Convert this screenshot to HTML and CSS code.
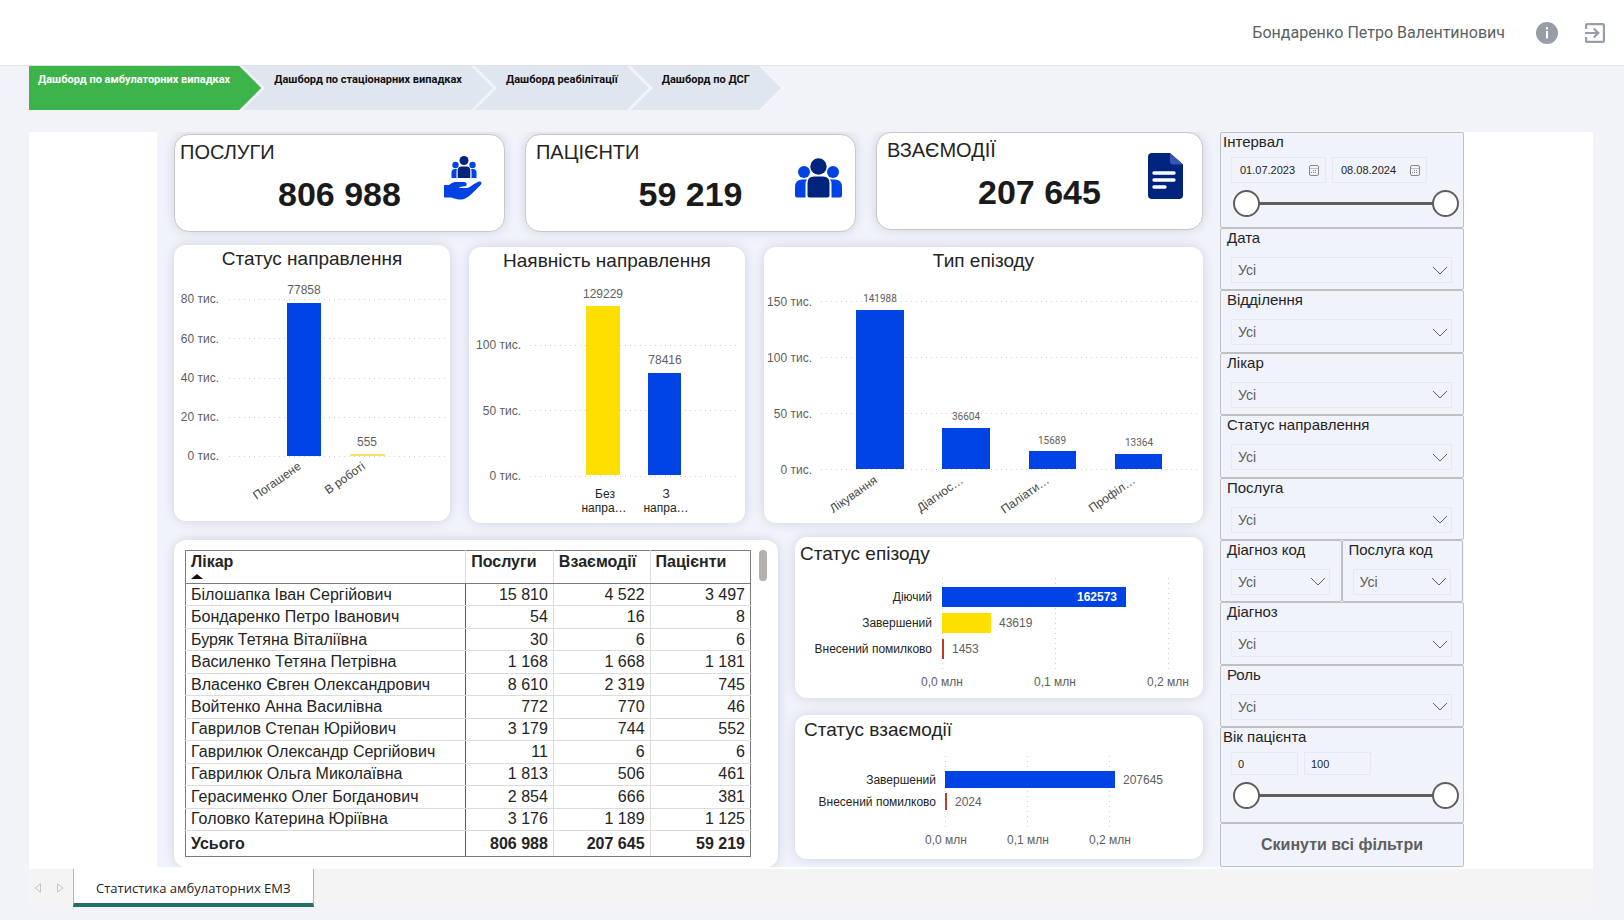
FILE: index.html
```html
<!DOCTYPE html>
<html lang="uk">
<head>
<meta charset="utf-8">
<meta name="viewport" content="width=device-width, initial-scale=1">
<title>Статистика амбулаторних ЕМЗ</title>
<link rel="stylesheet" href="styles.css">
</head>
<body>
<header class="topbar">
  <span class="user-name">Бондаренко Петро Валентинович</span>
  <button class="icon-btn" type="button" aria-label="Інформація">
    <svg width="22" height="22" viewBox="0 0 22 22"><circle cx="11" cy="11" r="11" fill="#969fa7"/><path d="M10 5h2v2.400h-2zM10 9h2v7.500h-2z" fill="#fff"/></svg>
  </button>
  <button class="icon-btn" type="button" aria-label="Вийти">
    <svg width="22" height="22" viewBox="0 0 22 22" fill="none" stroke="#969fa7" stroke-width="2.200"><path d="M2.100 7V3.200Q2.100 2.100 3.200 2.100H18.800Q19.900 2.100 19.900 3.200V18.800Q19.900 19.900 18.800 19.900H3.200Q2.100 19.900 2.100 18.800V15M1 11H14M9.800 6.500L14.300 11L9.800 15.500"/></svg>
  </button>
</header>

<nav class="steps" aria-label="Дашборди">
  <a class="step step-active" href="#ambulatory" aria-current="page">Дашборд по амбулаторних випадках</a>
  <a class="step" href="#inpatient">Дашборд по стаціонарних випадках</a>
  <a class="step" href="#rehab">Дашборд реабілітації</a>
  <a class="step" href="#drg">Дашборд по ДСГ</a>
</nav>

<main class="frame">
  <div class="canvas">
    <div class="board">
      <section class="row row-kpi">
        <article class="card kpi kpi-services">
          <h2 class="kpi-title">ПОСЛУГИ</h2>
          <p class="kpi-value">806 988</p>
          <svg class="kpi-icon" width="38" height="44" viewBox="0 0 38 44">
            <g fill="#0043e5">
              <circle cx="11.500" cy="9" r="3.200"/><circle cx="28.500" cy="9" r="3.200"/>
              <path d="M7.500 22V16.500Q7.500 13 11 13H13Q12.500 14 12.500 15.500V22ZM32.500 22V16.500Q32.500 13 29 13H27Q27.500 14 27.500 15.500V22Z"/>
              <path d="M0 29H5C8 26.500 10 26 13 26H20C23.500 26 23.500 30 20.500 30.300L15.500 31V32H22C25 32 27 30 30 28L34.500 25.800C37 25 38.500 27 36.500 29L27 38.500C23 42 20 43.500 17 43.500C11 43.500 9 41.500 6 41.500H0Z"/>
            </g>
            <g fill="#00247d"><circle cx="20" cy="4.500" r="4.500"/><path d="M13.700 22V14.500Q13.700 10.500 17.500 10.500H22.500Q26.300 10.500 26.300 14.500V22Z"/></g>
          </svg>
        </article>
        <article class="card kpi kpi-patients">
          <h2 class="kpi-title">ПАЦІЄНТИ</h2>
          <p class="kpi-value">59 219</p>
          <svg class="kpi-icon" width="47" height="40" viewBox="0 0 47 40">
            <g fill="#0043e5"><circle cx="9" cy="14" r="6"/><circle cx="38" cy="14" r="6"/>
            <path d="M12 21.500Q10.500 23.500 10.500 26V39.500H2Q0 39.500 0 37.500V29Q0 21.500 7.500 21.500ZM35 21.500Q36.500 23.500 36.500 26V39.500H45Q47 39.500 47 37.500V29Q47 21.500 39.500 21.500Z"/></g>
            <g fill="#00247d"><circle cx="23.500" cy="8.500" r="8.200"/><path d="M12.500 25Q12.500 18.500 19 18.500H28Q34.500 18.500 34.500 25V37.500Q34.500 39.500 32.500 39.500H14.500Q12.500 39.500 12.500 37.500Z"/></g>
          </svg>
        </article>
        <article class="card kpi kpi-visits">
          <h2 class="kpi-title">ВЗАЄМОДІЇ</h2>
          <p class="kpi-value">207 645</p>
          <svg class="kpi-icon" width="35" height="46" viewBox="0 0 35 46">
            <path d="M4 0H22L35 11.500V42Q35 46 31 46H4Q0 46 0 42V4Q0 0 4 0Z" fill="#00247d"/>
            <path d="M22 0L35 11.500H25Q22 11.500 22 8.500Z" fill="#3556b5"/>
            <path d="M6 20H26M6 27H26M6 34H17" stroke="#fff" stroke-width="3.400" stroke-linecap="round"/>
          </svg>
        </article>
      </section>

      <section class="row row-columns">
        <article class="card chart-card chart-referral">
          <h2 class="chart-title">Статус направлення</h2>
          <svg class="chart" viewBox="0 28 276 248">
            <path class="grid" d="M55 54.500H272M55 93.500H272M55 133.500H272M55 172.500H272M55 211.500H272"/>
            <g class="axis end"><text x="45" y="58">80 тис.</text><text x="45" y="98">60 тис.</text><text x="45" y="137">40 тис.</text><text x="45" y="176">20 тис.</text><text x="45" y="215">0 тис.</text></g>
            <rect class="blue" x="113" y="58" width="34" height="153"/>
            <rect class="pale" x="176" y="209" width="35" height="2"/>
            <g class="axis mid"><text x="130" y="49">77858</text><text x="193" y="201">555</text></g>
            <g class="tilt end"><text transform="translate(128 223) rotate(-35)">Погашене</text><text transform="translate(192 223) rotate(-35)">В роботі</text></g>
          </svg>
        </article>
        <article class="card chart-card chart-presence">
          <h2 class="chart-title">Наявність направлення</h2>
          <svg class="chart" viewBox="0 28 276 248">
            <path class="grid" d="M61 98.500H268M61 163.500H268M61 229.500H268"/>
            <g class="axis end"><text x="52" y="102">100 тис.</text><text x="52" y="168">50 тис.</text><text x="52" y="233">0 тис.</text></g>
            <rect class="yellow" x="117" y="59" width="34" height="169"/>
            <rect class="blue" x="179" y="126" width="33" height="102"/>
            <g class="axis mid"><text x="134" y="51">129229</text><text x="196" y="117">78416</text></g>
            <g class="names mid"><text x="136" y="251">Без</text><text x="135" y="265">напра…</text><text x="197" y="251">З</text><text x="197" y="265">напра…</text></g>
          </svg>
        </article>
        <article class="card chart-card chart-type">
          <h2 class="chart-title">Тип епізоду</h2>
          <svg class="chart" viewBox="0 28 439 248">
            <path class="grid" d="M57 54.500H437M57 110.500H437M57 166.500H437M57 222.500H437"/>
            <g class="axis end"><text x="48" y="59">150 тис.</text><text x="48" y="115">100 тис.</text><text x="48" y="171">50 тис.</text><text x="48" y="227">0 тис.</text></g>
            <g class="blue"><rect x="92" y="63" width="48" height="159"/><rect x="178" y="181" width="48" height="41"/><rect x="265" y="204" width="47" height="18"/><rect x="351" y="207" width="47" height="15"/></g>
            <g class="small mid"><text x="116" y="55">141988</text><text x="202" y="173">36604</text><text x="288" y="197">15689</text><text x="375" y="199">13364</text></g>
            <g class="tilt end"><text transform="translate(114 235) rotate(-35)">Лікування</text><text transform="translate(200 235) rotate(-35)">Діагнос…</text><text transform="translate(286 235) rotate(-35)">Паліати…</text><text transform="translate(372 235) rotate(-35)">Профіл…</text></g>
          </svg>
        </article>
      </section>

      <section class="row-details">
        <article class="card table-card">
          <table class="doctors">
            <thead><tr><th class="c-name">Лікар<span class="sort" aria-hidden="true"></span></th><th class="c-serv">Послуги</th><th class="c-vis">Взаємодії</th><th class="c-pat">Пацієнти</th></tr></thead>
            <tbody>
              <tr><td>Білошапка Іван Сергійович</td><td>15 810</td><td>4 522</td><td>3 497</td></tr>
              <tr><td>Бондаренко Петро Іванович</td><td>54</td><td>16</td><td>8</td></tr>
              <tr><td>Буряк Тетяна Віталіївна</td><td>30</td><td>6</td><td>6</td></tr>
              <tr><td>Василенко Тетяна Петрівна</td><td>1 168</td><td>1 668</td><td>1 181</td></tr>
              <tr><td>Власенко Євген Олександрович</td><td>8 610</td><td>2 319</td><td>745</td></tr>
              <tr><td>Войтенко Анна Василівна</td><td>772</td><td>770</td><td>46</td></tr>
              <tr><td>Гаврилов Степан Юрійович</td><td>3 179</td><td>744</td><td>552</td></tr>
              <tr><td>Гаврилюк Олександр Сергійович</td><td>11</td><td>6</td><td>6</td></tr>
              <tr><td>Гаврилюк Ольга Миколаївна</td><td>1 813</td><td>506</td><td>461</td></tr>
              <tr><td>Герасименко Олег Богданович</td><td>2 854</td><td>666</td><td>381</td></tr>
              <tr><td>Головко Катерина Юріївна</td><td>3 176</td><td>1 189</td><td>1 125</td></tr>
            </tbody>
            <tfoot><tr><td>Усього</td><td>806 988</td><td>207 645</td><td>59 219</td></tr></tfoot>
          </table>
          <span class="scroll-thumb"></span>
        </article>
        <div class="stack">
          <article class="card chart-card">
            <h2 class="chart-title bar-title">Статус епізоду</h2>
            <svg class="chart" viewBox="0 32 408 129">
              <path class="grid" d="M147.500 41V134M260.500 41V134M373.500 41V134"/>
              <rect class="blue" x="147" y="50" width="184" height="20"/><rect class="yellow" x="147" y="76" width="49" height="20"/><rect class="red" x="147" y="102" width="2" height="20"/>
              <g class="names end"><text x="137" y="64">Діючий</text><text x="137" y="90">Завершений</text><text x="137" y="116">Внесений помилково</text></g>
              <text class="inside end" x="322" y="64">162573</text>
              <g class="axis"><text x="204" y="90">43619</text><text x="157" y="116">1453</text></g>
              <g class="axis mid"><text x="147" y="149">0,0 млн</text><text x="260" y="149">0,1 млн</text><text x="373" y="149">0,2 млн</text></g>
            </svg>
          </article>
          <article class="card chart-card">
            <h2 class="chart-title bar-title visits-title">Статус взаємодії</h2>
            <svg class="chart" viewBox="0 30 408 114">
              <path class="grid" d="M150.500 41V114M232.500 41V114M314.500 41V114"/>
              <rect class="blue" x="150" y="56" width="170" height="17"/><rect class="red" x="150" y="78" width="2" height="17"/>
              <g class="names end"><text x="141" y="69">Завершений</text><text x="141" y="91">Внесений помилково</text></g>
              <g class="axis"><text x="328" y="69">207645</text><text x="160" y="91">2024</text></g>
              <g class="axis mid"><text x="151" y="129">0,0 млн</text><text x="233" y="129">0,1 млн</text><text x="315" y="129">0,2 млн</text></g>
            </svg>
          </article>
        </div>
      </section>
    </div>

    <form class="filters">
      <fieldset class="filter filter-range">
        <legend class="filter-label">Інтервал</legend>
        <div class="inputs">
          <span class="date-box"><input class="date-input" type="text" aria-label="Від" value="01.07.2023"><svg width="10" height="11" viewBox="0 0 10 11" fill="none" stroke="#8a8886"><rect x=".5" y=".5" width="9" height="10" rx="1.500"/><path d="M.5 3.500H9.500M4 5.500H8M2 7.500H8" stroke-dasharray="1 1"/></svg></span>
          <span class="date-box"><input class="date-input" type="text" aria-label="До" value="08.08.2024"><svg width="10" height="11" viewBox="0 0 10 11" fill="none" stroke="#8a8886"><rect x=".5" y=".5" width="9" height="10" rx="1.500"/><path d="M.5 3.500H9.500M4 5.500H8M2 7.500H8" stroke-dasharray="1 1"/></svg></span>
        </div>
        <div class="slider"><input type="range" aria-label="Початок інтервалу" value="0"><input type="range" aria-label="Кінець інтервалу" value="100"></div>
      </fieldset>
      <div class="filter"><label class="filter-label" for="f-date">Дата</label><select class="pick" id="f-date"><option>Усі</option></select></div>
      <div class="filter"><label class="filter-label" for="f-dep">Відділення</label><select class="pick" id="f-dep"><option>Усі</option></select></div>
      <div class="filter"><label class="filter-label" for="f-doc">Лікар</label><select class="pick" id="f-doc"><option>Усі</option></select></div>
      <div class="filter"><label class="filter-label" for="f-ref">Статус направлення</label><select class="pick" id="f-ref"><option>Усі</option></select></div>
      <div class="filter"><label class="filter-label" for="f-serv">Послуга</label><select class="pick" id="f-serv"><option>Усі</option></select></div>
      <div class="filter-pair">
        <div class="filter"><label class="filter-label" for="f-dcode">Діагноз код</label><select class="pick" id="f-dcode"><option>Усі</option></select></div>
        <div class="filter"><label class="filter-label" for="f-scode">Послуга код</label><select class="pick" id="f-scode"><option>Усі</option></select></div>
      </div>
      <div class="filter"><label class="filter-label" for="f-diag">Діагноз</label><select class="pick" id="f-diag"><option>Усі</option></select></div>
      <div class="filter"><label class="filter-label" for="f-role">Роль</label><select class="pick" id="f-role"><option>Усі</option></select></div>
      <fieldset class="filter filter-range">
        <legend class="filter-label">Вік пацієнта</legend>
        <div class="inputs">
          <input class="age-input" type="text" aria-label="Вік від" value="0">
          <input class="age-input" type="text" aria-label="Вік до" value="100">
        </div>
        <div class="slider"><input type="range" aria-label="Мінімальний вік" value="0"><input type="range" aria-label="Максимальний вік" value="100"></div>
      </fieldset>
      <button class="reset" type="reset">Скинути всі фільтри</button>
    </form>
  </div>
</main>

<footer class="tabs">
  <button class="tab-arrow" type="button" aria-label="Попередня сторінка"><svg width="8" height="10" viewBox="0 0 8 10" fill="none" stroke="#c4c4c4"><path d="M6.500 .8V9.200L1 5Z"/></svg></button>
  <button class="tab-arrow" type="button" aria-label="Наступна сторінка"><svg width="8" height="10" viewBox="0 0 8 10" fill="none" stroke="#c4c4c4"><path d="M1.500 .8V9.200L7 5Z"/></svg></button>
  <button class="tab" type="button">Статистика амбулаторних ЕМЗ</button>
</footer>
</body>
</html>
```

FILE: styles.css
```css
* { box-sizing: border-box; }

body {
  margin: 0;
  min-height: 100vh;
  background: #f2f3f8;
  color: #252423;
  font-family: "Liberation Sans", Arial, sans-serif;
}

h2, p { margin: 0; font-weight: 400; }
button { font-family: inherit; cursor: pointer; }

/* Header */
.topbar {
  display: flex;
  align-items: center;
  justify-content: flex-end;
  height: 66px;
  padding-right: 18px;
  background: #fff;
  border-bottom: 1px solid #dfe4ea;
}
.user-name {
  margin-right: 31px;
  color: #5c5f62;
  font-family: Roboto, sans-serif;
  font-size: 16px;
}
.icon-btn { display: flex; padding: 0; border: 0; background: none; }
.icon-btn + .icon-btn { margin-left: 26px; }

/* Dashboard switcher */
.steps {
  display: flex;
  height: 44px;
  padding-left: 29px;
}
.step {
  padding: 7px 31px 0 31px;
  background: #e0e6f0;
  clip-path: polygon(0 0, calc(100% - 22px) 0, 100% 50%, calc(100% - 22px) 100%, 0 100%, 22px 50%);
  color: #111;
  font-family: Roboto, sans-serif;
  font-size: 11px;
  font-weight: 700;
  line-height: 14px;
  text-decoration: none;
  white-space: nowrap;
}
.step + .step { margin-left: -18px; }
.step-active {
  padding-left: 9px;
  background: #3cb44a;
  clip-path: polygon(0 0, calc(100% - 22px) 0, 100% 50%, calc(100% - 22px) 100%, 0 100%);
  color: #fff;
}

/* Report */
.frame {
  margin: 22px 31px 0 29px;
  padding: 0 129px 2px 128px;
  background: #fff;
}
.canvas {
  display: flex;
  overflow: hidden;
  background: #f0f3fb;
}
.board { flex: 1; min-width: 0; padding: 0 17px; }
.row { display: flex; }
.card {
  background: #fff;
  border-radius: 12px;
  box-shadow: 0 0 12px rgba(0, 0, 0, .13);
}

/* Key figures */
.row-kpi { gap: 20px; height: 100px; }
.kpi {
  display: grid;
  grid-template: 36px 46px / 1fr auto 1fr;
  flex: 331;
  height: 98px;
  align-self: flex-end;
  border: 1px solid #c8c8c8;
  border-radius: 15px;
}
.kpi-title { grid-area: 1 / 1 / 2 / 4; padding: 4px 0 0 10px; font-size: 20px; line-height: 26px; }
.kpi-value { grid-area: 2 / 2; color: #1a1a1a; font-size: 34px; font-weight: 700; line-height: 46px; }
.kpi-icon { grid-area: 1 / 3 / 3 / 4; justify-self: end; align-self: center; margin: 4px 22px 0 0; }
.kpi-services .kpi-title { padding-left: 5px; }
.kpi-patients .kpi-icon { margin-right: 13px; }
.kpi-visits { flex: 327; align-self: flex-start; }
.kpi-visits .kpi-icon { margin-right: 19px; }

/* Charts */
.row-columns { gap: 19px; height: 278px; margin-top: 13px; align-items: flex-end; }
.chart-card { min-width: 0; overflow: hidden; }
.chart-referral { flex: 276; align-self: flex-start; }
.chart-presence { flex: 276; }
.chart-type { flex: 439; }
.chart-title { font-size: 19px; line-height: 28px; text-align: center; }
.chart { display: block; width: 100%; height: auto; }
.chart text { font-size: 12px; }
.chart .grid { fill: none; stroke: #d0d0d0; stroke-dasharray: 1 4; }
.blue { fill: #0043e5; }
.yellow { fill: #ffdf00; }
.pale { fill: #f3e36a; }
.red { fill: #c0392b; }
.axis { fill: #605e5c; }
.names { fill: #252423; }
.tilt { fill: #454443; }
.end { text-anchor: end; }
.mid { text-anchor: middle; }
.chart .inside { fill: #fff; font-weight: 700; }
.chart .small text { fill: #605e5c; font-family: Roboto, sans-serif; font-size: 10px; }

/* Details */
.row-details {
  display: grid;
  grid-template-columns: minmax(0, 604fr) minmax(0, 408fr);
  gap: 17px;
  height: 330px;
  margin-top: 14px;
}
.table-card {
  display: flex;
  align-self: end;
  align-items: flex-start;
  gap: 8px;
  height: 327px;
  padding: 10px 11px;
}
.stack { display: flex; flex-direction: column; gap: 17px; }
.bar-title { padding: 2px 0 0 5px; line-height: 30px; text-align: left; }
.visits-title { padding: 0 0 0 9px; }

.doctors {
  flex: 1;
  height: 307px;
  border: 1px solid #7a7a7a;
  border-collapse: collapse;
  table-layout: fixed;
  font-size: 16px;
  line-height: 20px;
}
.doctors th, .doctors td { padding: 0 5px; border: 1px solid #dcdcdc; text-align: right; white-space: nowrap; }
.doctors tr > :first-child { border-left-color: #7a7a7a; text-align: left; }
.doctors tr > :last-child { border-right-color: #7a7a7a; }
.doctors td:first-child { border-right-color: #605e5c; }
.doctors thead th { height: 33px; padding-top: 1px; border-top-color: #7a7a7a; border-bottom-color: #7a7a7a; text-align: left; vertical-align: top; }
.doctors tfoot td { height: 26px; border-bottom-color: #7a7a7a; font-weight: 700; }
.c-name { width: 281px; }
.c-serv { width: 88px; }
.c-vis { width: 97px; }
.c-pat { width: 101px; }
.sort {
  display: block;
  width: 0;
  margin-top: 2px;
  border: 6px solid transparent;
  border-top: 0;
  border-bottom: 5px solid #111;
}
.scroll-thumb { width: 8px; height: 31px; border-radius: 4px; background: #b3b0ad; }

/* Filters */
.filters {
  display: grid;
  grid-template-rows: 96px repeat(8, 1fr) 96px 44px;
  width: 244px;
  height: 735px;
}
.filter {
  min-width: 0;
  margin: 0;
  padding: 0 11px 0 10px;
  border: 1px solid #bfc0c4;
  border-radius: 2px;
}
.filter-label { display: block; margin-left: -4px; padding: 0; font-size: 15px; line-height: 18px; }
.pick {
  display: block;
  width: 100%;
  height: 26px;
  margin-top: 10px;
  padding: 0 6px;
  appearance: none;
  border: 1px solid #e6e8ee;
  border-radius: 0;
  background: url("data:image/svg+xml,%3Csvg xmlns='http://www.w3.org/2000/svg' width='16' height='9' fill='none' stroke='%23605e5c'%3E%3Cpath d='M1 1L8 8L15 1'/%3E%3C/svg%3E") no-repeat right 3px center;
  color: #605e5c;
  font: 14px "Liberation Sans", Arial, sans-serif;
}
.filter-pair { display: grid; grid-template-columns: 1fr 1fr; padding-right: 1px; }
.filter-range .filter-label { float: left; width: 100%; margin-left: -8px; }
.inputs { display: flex; clear: both; gap: 6px; padding-top: 6px; }
.date-box {
  display: flex;
  align-items: center;
  justify-content: space-between;
  width: 95px;
  height: 26px;
  padding: 0 6px 0 8px;
  border: 1px solid #e6e8ee;
}
.date-input, .age-input {
  width: 64px;
  padding: 0;
  border: 0;
  background: none;
  color: #252423;
  font: 11px "Liberation Sans", Arial, sans-serif;
}
.age-input { width: 67px; height: 23px; padding: 0 6px; border: 1px solid #e6e8ee; }
.slider {
  position: relative;
  height: 27px;
  margin: 7px -7px 0 2px;
  background: linear-gradient(#605e5c, #605e5c) center / calc(100% - 20px) 3px no-repeat;
}
.slider input {
  position: absolute;
  inset: 0;
  width: 100%;
  height: 27px;
  margin: 0;
  appearance: none;
  background: none;
  pointer-events: none;
}
.slider input::-webkit-slider-thumb {
  width: 27px;
  height: 27px;
  appearance: none;
  border: 2px solid #605e5c;
  border-radius: 50%;
  background: #fff;
  pointer-events: auto;
}
.reset {
  border: 1px solid #bfc0c4;
  border-radius: 2px;
  background: none;
  color: #605e5c;
  font-size: 16px;
  font-weight: 700;
}

/* Page tabs */
.tabs {
  display: flex;
  align-items: center;
  height: 38px;
  margin: 0 31px 0 29px;
  background: #f4f4f4;
}
.tab-arrow { display: flex; width: 22px; padding: 0 4px 0 0; justify-content: center; border: 0; background: none; }
.tab {
  height: 38px;
  padding: 4px 22px 0;
  border: 1px solid #b5b5b5;
  border-top: 0;
  border-bottom: 4px solid #217165;
  background: #fff;
  color: #252423;
  font-family: "Open Sans", "Noto Sans", sans-serif;
  font-size: 13px;
}
```
